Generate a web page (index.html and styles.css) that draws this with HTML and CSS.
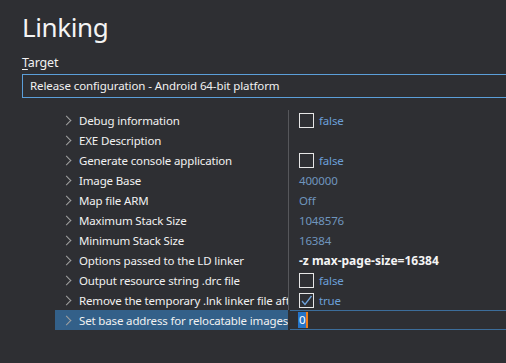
FILE: index.html
```html
<!DOCTYPE html>
<html lang="en">
<head>
    <meta charset="utf-8">
    <title>Linking</title>
    <link rel="stylesheet" href="styles.css">
</head>
<body>
    <h1 class="title">Linking</h1>

    <div class="target-label"><u>T</u>arget</div>
    <div class="target-select">Release configuration - Android 64-bit platform</div>

    <div class="props">
        <div class="row">
            <div class="name"><span class="chev"></span>Debug information</div>
            <div class="value"><span class="check"></span><span class="val">false</span></div>
        </div>
        <div class="row">
            <div class="name"><span class="chev"></span>EXE Description</div>
            <div class="value"></div>
        </div>
        <div class="row">
            <div class="name"><span class="chev"></span>Generate console application</div>
            <div class="value"><span class="check"></span><span class="val">false</span></div>
        </div>
        <div class="row">
            <div class="name"><span class="chev"></span>Image Base</div>
            <div class="value"><span class="val dim">400000</span></div>
        </div>
        <div class="row">
            <div class="name"><span class="chev"></span>Map file ARM</div>
            <div class="value"><span class="val dim">Off</span></div>
        </div>
        <div class="row">
            <div class="name"><span class="chev"></span>Maximum Stack Size</div>
            <div class="value"><span class="val dim">1048576</span></div>
        </div>
        <div class="row">
            <div class="name"><span class="chev"></span>Minimum Stack Size</div>
            <div class="value"><span class="val dim">16384</span></div>
        </div>
        <div class="row">
            <div class="name"><span class="chev"></span>Options passed to the LD linker</div>
            <div class="value"><span class="val bold">-z max-page-size=16384</span></div>
        </div>
        <div class="row">
            <div class="name"><span class="chev"></span>Output resource string .drc file</div>
            <div class="value"><span class="check"></span><span class="val">false</span></div>
        </div>
        <div class="row">
            <div class="name"><span class="chev"></span>Remove the temporary .lnk linker file aft</div>
            <div class="value">
                <span class="check">
                    <svg width="13" height="13" viewBox="0 0 13 13"><polyline points="2,7 5,10.5 11.5,2" fill="none" stroke="#6fa3dc" stroke-width="1.3"/></svg>
                </span><span class="val">true</span>
            </div>
        </div>
        <div class="row selected">
            <div class="name"><span class="chev"></span>Set base address for relocatable images</div>
            <div class="value"><span class="edit"><span class="sel">0</span><span class="caret"></span></span></div>
        </div>
    </div>
</body>
</html>
```

FILE: styles.css
```css
body {
    margin: 0;
    background-color: #2e2f33;
    color: #f1f1f1;
    font-family: "Noto Sans", "Open Sans", sans-serif;
    font-size: 11.5px;
    letter-spacing: -0.15px;
    overflow: hidden;
    height: 363px;
}

.title {
    margin: 0;
    padding: 8px 0 0 22px;
    font-size: 26px;
    font-weight: normal;
    letter-spacing: -0.4px;
    line-height: 38px;
    color: #f4f4f4;
}

.target-label {
    margin: 9px 0 0 22px;
    font-size: 12.5px;
    line-height: 16px;
}

.target-label u {
    text-underline-offset: 2px;
}

.target-select {
    margin: 3px -20px 0 22px;
    height: 22px;
    line-height: 21px;
    border: 1px solid #5b9fd9;
    padding-left: 7px;
    font-size: 11.5px;
    letter-spacing: -0.1px;
}

.props {
    margin-top: 12px;
}

.row {
    display: flex;
    height: 20px;
    padding-left: 55px;
}

.name {
    width: 233px;
    flex: none;
    display: flex;
    align-items: center;
    white-space: nowrap;
    overflow: hidden;
    padding-left: 8px;
    box-sizing: border-box;
}

.chev {
    width: 6px;
    height: 6px;
    border-right: 1px solid #a0a0a0;
    border-bottom: 1px solid #a0a0a0;
    transform: rotate(-45deg);
    margin-right: 9px;
    flex: none;
}

.value {
    flex: 1;
    display: flex;
    align-items: center;
    border-left: 1px solid #56575b;
    padding-left: 10px;
    white-space: nowrap;
}

.check {
    width: 13px;
    height: 13px;
    border: 1px solid #e6e6e6;
    margin-right: 5px;
    display: flex;
}

.val {
    color: #6b9fd8;
}

.val.dim {
    color: #6f95be;
}

.val.bold {
    color: #f4f4f4;
    font-weight: bold;
    font-size: 12px;
    letter-spacing: 0;
}

.selected .name {
    background-color: #336089;
}

.selected .value {
    border-left: 2px solid #2e2f33;
    padding-left: 0;
}

.edit {
    flex: 1;
    height: 18px;
    border-top: 1px solid #3c6d9a;
    border-bottom: 1px solid #3c6d9a;
    display: flex;
    align-items: center;
    padding-left: 8px;
}

.sel {
    background-color: #2673c6;
    color: #ffffff;
    line-height: 16px;
    padding: 0 1px;
}

.caret {
    width: 2px;
    height: 16px;
    background-color: #f07d1a;
}
```
